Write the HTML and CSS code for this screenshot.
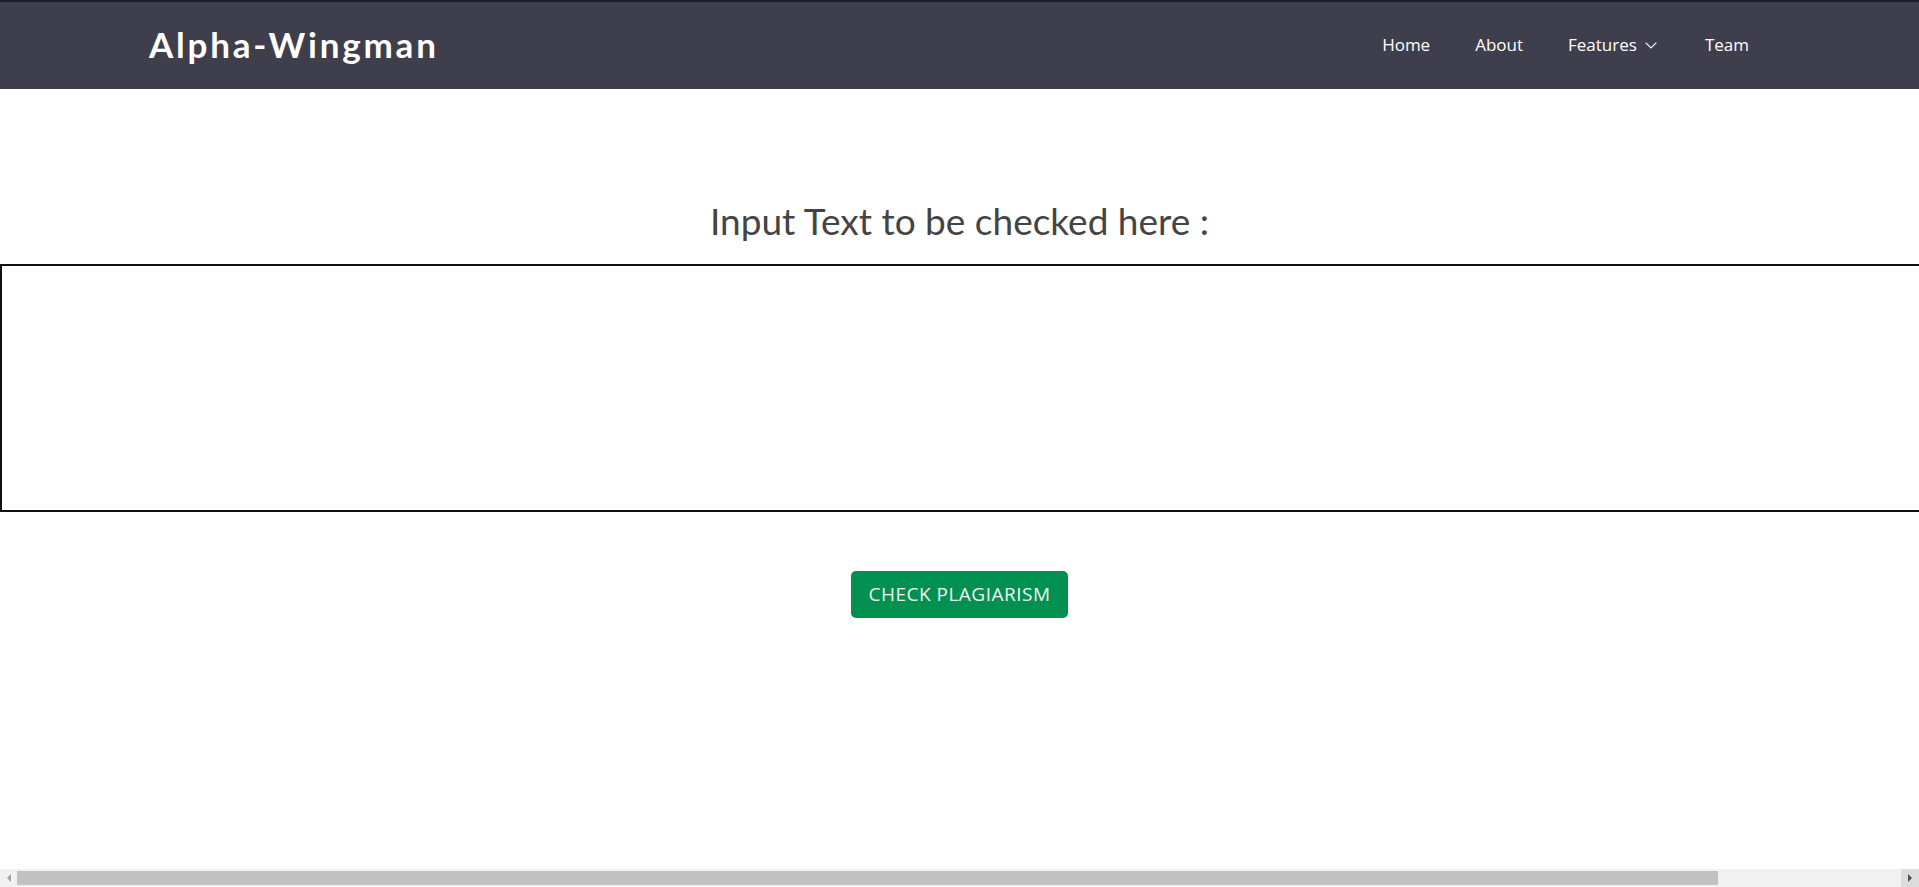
FILE: index.html
```html
<!DOCTYPE html>
<html lang="en">
<head>
<meta charset="utf-8">
<title>Alpha-Wingman</title>
<link rel="stylesheet" href="styles.css">
</head>
<body>
<div class="viewport">
  <header class="header">
    <a class="logo" href="#">Alpha-Wingman</a>
    <nav class="navbar">
      <a href="#" class="nav-link">Home</a>
      <a href="#" class="nav-link">About</a>
      <a href="#" class="nav-link dropdown">Features
        <svg class="chev" viewBox="0 0 12 7" width="12" height="7"><path d="M0.6 0.6 L6 6 L11.4 0.6" fill="none" stroke="#ffffff" stroke-width="1.1"/></svg>
      </a>
      <a href="#" class="nav-link">Team</a>
    </nav>
  </header>
  <main class="main">
    <h2 class="title">Input Text to be checked here :</h2>
    <textarea class="input-text"></textarea>
    <div class="actions">
      <button class="btn-check" type="button">CHECK PLAGIARISM</button>
    </div>
  </main>
</div>
<div class="hscroll">
  <div class="sb-btn sb-left">
    <svg viewBox="0 0 4 8" width="4" height="8"><path d="M4 0 L0 4 L4 8 Z" fill="#a3a3a3"/></svg>
  </div>
  <div class="sb-track">
    <div class="sb-thumb"></div>
  </div>
  <div class="sb-btn sb-right">
    <svg viewBox="0 0 4 8" width="4" height="8"><path d="M0 0 L4 4 L0 8 Z" fill="#505050"/></svg>
  </div>
</div>
</body>
</html>
```

FILE: styles.css
```css
html, body {
  margin: 0;
  padding: 0;
  background: #ffffff;
}

body {
  font-family: "Open Sans", "Liberation Sans", sans-serif;
  height: 100vh;
  display: flex;
  flex-direction: column;
  overflow: hidden;
}

.viewport {
  flex: 1;
  min-height: 0;
  overflow: hidden;
}

.header {
  box-sizing: border-box;
  width: 100%;
  height: 89px;
  border-top: 2px solid #1f1e2c;
  background: #3f3e4c;
  display: flex;
  align-items: center;
  justify-content: space-between;
  padding: 0 170px 0 149px;
}

.logo {
  font-family: "Lato", "Liberation Sans", sans-serif;
  font-weight: 700;
  font-size: 35px;
  letter-spacing: 2.8px;
  color: #ffffff;
  text-decoration: none;
  line-height: 1;
  margin-top: -2px;
}

.navbar {
  display: flex;
  align-items: center;
  gap: 45px;
}

.nav-link {
  font-family: "Open Sans", sans-serif;
  font-size: 17px;
  color: #ffffff;
  text-decoration: none;
  display: flex;
  align-items: center;
  margin-top: -2px;
}

.chev {
  margin-left: 7px;
  margin-right: 2px;
  margin-top: 1px;
  width: 14px;
}

.main {
  padding-top: 110px;
}

.title {
  margin: 0 0 21px 0;
  font-family: "Lato", "Liberation Sans", sans-serif;
  font-weight: 400;
  font-size: 37px;
  line-height: 1.2;
  color: #444444;
  text-align: center;
}

.input-text {
  display: block;
  box-sizing: border-box;
  width: 2125px;
  height: 248px;
  margin: 0;
  border: 2px solid #111111;
  resize: none;
  outline: none;
  padding: 4px;
  font-family: "Open Sans", sans-serif;
  font-size: 16px;
}

.actions {
  display: flex;
  justify-content: center;
  width: 100vw;
  margin-top: 59px;
}

.btn-check {
  box-sizing: border-box;
  height: 47px;
  padding: 0 17px;
  border: none;
  border-radius: 5px;
  background: #009150;
  color: #f4f4f4;
  font-family: "Open Sans", sans-serif;
  font-size: 19px;
  letter-spacing: 0.5px;
  line-height: 47px;
  cursor: pointer;
}

.hscroll {
  flex: 0 0 18px;
  display: flex;
  background: #f1f1f1;
}

.sb-btn {
  flex: 0 0 17px;
  display: flex;
  align-items: center;
  justify-content: center;
}

.sb-right {
  flex-basis: 18px;
  background: #dcdcdc;
}

.sb-track {
  flex: 1;
  display: flex;
  align-items: center;
}

.sb-thumb {
  width: 1701px;
  height: 14px;
  background: #c1c1c1;
}
```
